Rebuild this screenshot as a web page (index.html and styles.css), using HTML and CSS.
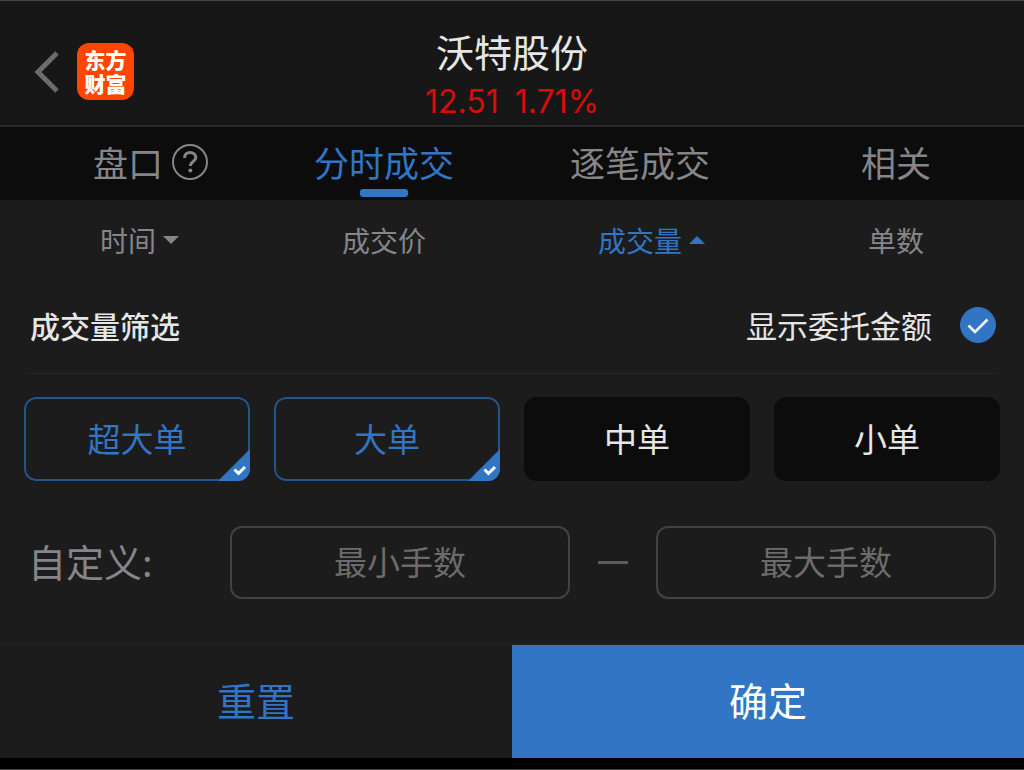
FILE: index.html
```html
<!DOCTYPE html>
<html lang="zh-CN">
<head>
    <meta charset="utf-8">
    <meta name="viewport" content="width=device-width, initial-scale=1">
    <title>沃特股份</title>
    <link rel="stylesheet" href="styles.css">
</head>
<body>
    <header class="header">
        <div class="header-left">
            <button class="back" type="button" aria-label="返回">
                <svg width="26" height="44" viewBox="0 0 26 44" fill="none" stroke="#6b6b6b" stroke-width="5">
                    <path d="M23 3L4 22L23 41"/>
                </svg>
            </button>
            <div class="logo">东方<br>财富</div>
        </div>
        <div class="stock">
            <h1>沃特股份</h1>
            <p class="quote"><span>12.51</span><span>1.71%</span></p>
        </div>
    </header>

    <nav class="tabs">
        <a class="tab" href="#">盘口<svg class="help" width="38" height="38" viewBox="0 0 38 38" fill="none" stroke="#85858a">
            <circle cx="19" cy="19" r="17" stroke-width="2"/>
            <path d="M13.500 15C13.500 11.500 16 9.500 19 9.500C22.300 9.500 24.800 11.500 24.800 14.500C24.800 18.500 19.300 18.500 19.300 23" stroke-width="3"/>
            <circle cx="19.300" cy="27.500" r="2" fill="#85858a" stroke="none"/>
        </svg></a>
        <a class="tab active" href="#">分时成交</a>
        <a class="tab" href="#">逐笔成交</a>
        <a class="tab" href="#">相关</a>
    </nav>

    <div class="columns">
        <button class="column" type="button">时间<svg class="arrow" width="16" height="8" viewBox="0 0 16 8" fill="currentColor"><path d="M0 0H16L8 8Z"/></svg></button>
        <button class="column" type="button">成交价</button>
        <button class="column active" type="button">成交量<svg class="arrow" width="16" height="8" viewBox="0 0 16 8" fill="currentColor"><path d="M0 8H16L8 0Z"/></svg></button>
        <button class="column" type="button">单数</button>
    </div>

    <form class="filter">
        <div class="filter-head">
            <h2>成交量筛选</h2>
            <label class="show-amount">
                显示委托金额
                <span class="round">
                    <input type="checkbox" checked>
                    <svg width="36" height="36" viewBox="0 0 36 36" fill="none" stroke="#fff" stroke-width="2.500"><path d="M8.500 18.500L15 25L27.500 12.500"/></svg>
                </span>
            </label>
        </div>

        <div class="chips">
            <label class="chip">
                <input type="checkbox" checked>
                <span>超大单</span>
                <svg class="corner" width="32" height="32" viewBox="0 0 32 32"><path d="M32 0V32H0Z" fill="#3175c4"/><path d="M16.500 20.500L20.500 24.500L27 18" fill="none" stroke="#fff" stroke-width="3"/></svg>
            </label>
            <label class="chip">
                <input type="checkbox" checked>
                <span>大单</span>
                <svg class="corner" width="32" height="32" viewBox="0 0 32 32"><path d="M32 0V32H0Z" fill="#3175c4"/><path d="M16.500 20.500L20.500 24.500L27 18" fill="none" stroke="#fff" stroke-width="3"/></svg>
            </label>
            <label class="chip">
                <input type="checkbox">
                <span>中单</span>
            </label>
            <label class="chip">
                <input type="checkbox">
                <span>小单</span>
            </label>
        </div>

        <div class="custom">
            <label class="custom-label" for="min">自定义:</label>
            <input class="lots" id="min" type="text" inputmode="numeric" placeholder="最小手数">
            <span class="dash"></span>
            <input class="lots" id="max" type="text" inputmode="numeric" placeholder="最大手数" aria-label="最大手数">
        </div>

        <div class="actions">
            <button class="reset" type="reset">重置</button>
            <button class="confirm" type="submit">确定</button>
        </div>
    </form>
</body>
</html>
```

FILE: styles.css
```css
* {
    box-sizing: border-box;
}

body {
    margin: 0;
    min-height: 100vh;
    display: flex;
    flex-direction: column;
    background-color: #1c1c1c;
    border-top: 1px solid #444;
    border-bottom: 1px solid #444;
    color: #e6e6e6;
    font-family: "Noto Sans CJK SC", sans-serif;
}

h1, h2, p {
    margin: 0;
}

button, input {
    font-family: inherit;
}

button {
    padding: 0;
    border: none;
    background: none;
    cursor: pointer;
}

svg {
    display: block;
}

/* header */
.header {
    display: grid;
    grid-template-columns: 1fr auto 1fr;
    padding: 27px 34px 0;
    background-color: #171717;
    border-bottom: 2px solid #282828;
}

.header-left {
    display: flex;
    align-items: center;
    gap: 17px;
    height: 87px;
}

.logo {
    width: 57px;
    height: 57px;
    padding: 4px 0;
    border-radius: 12px;
    background-color: #ff4500;
    color: #fff;
    font-size: 21px;
    font-weight: 900;
    line-height: 24px;
    text-align: center;
}

.stock {
    text-align: center;
}

.stock h1 {
    font-size: 38px;
    font-weight: 400;
    line-height: 46px;
}

.quote {
    display: flex;
    justify-content: center;
    gap: 16px;
    padding-top: 4px;
    color: #d90b0b;
    font-family: Inter, sans-serif;
    font-size: 32px;
    line-height: 47px;
}

/* tabs */
.tabs {
    display: flex;
    background-color: #0c0c0c;
}

.tab {
    flex: 1;
    display: flex;
    justify-content: center;
    align-items: center;
    position: relative;
    height: 73px;
    padding-bottom: 3px;
    color: #85858a;
    font-size: 35px;
    line-height: 70px;
    text-decoration: none;
}

.help {
    margin-left: 8px;
    margin-right: -46px;
}

.tab.active,
.column.active {
    color: #3175c4;
}

.tab.active::after {
    content: "";
    position: absolute;
    bottom: 3px;
    left: 50%;
    width: 48px;
    height: 8px;
    margin-left: -24px;
    border-radius: 3px;
    background-color: #3175c4;
}

/* sortable columns */
.columns {
    display: flex;
}

.column {
    flex: 1;
    display: flex;
    justify-content: center;
    align-items: center;
    height: 80px;
    color: #85858a;
    font-size: 28px;
    line-height: 80px;
}

.arrow {
    margin-left: 7px;
    margin-right: -23px;
}

/* filter panel */
.filter {
    flex: 1;
    display: flex;
    flex-direction: column;
}

.filter-head {
    display: flex;
    justify-content: space-between;
    align-items: center;
    height: 94px;
    margin: 0 28px;
    padding-bottom: 3px;
    border-bottom: 1px solid #272727;
}

.filter-head h2 {
    padding-left: 2px;
    font-size: 30px;
    font-weight: 500;
    line-height: 48px;
}

.show-amount {
    display: flex;
    align-items: center;
    gap: 28px;
    font-size: 31px;
    line-height: 48px;
}

.round {
    position: relative;
    width: 36px;
    height: 36px;
}

.round input {
    appearance: none;
    display: block;
    width: 36px;
    height: 36px;
    margin: 0;
    border: 1px solid #3175c4;
    border-radius: 50%;
}

.round input:checked {
    background-color: #3175c4;
}

.round svg {
    position: absolute;
    top: 0;
    left: 0;
    pointer-events: none;
}

.round input:not(:checked) + svg {
    display: none;
}

.chips {
    display: flex;
    gap: 24px;
    padding: 23px 24px 0;
}

.chip {
    flex: 1;
    position: relative;
    height: 84px;
    border-radius: 12px;
    overflow: hidden;
    font-size: 33px;
    line-height: 82px;
    text-align: center;
    cursor: pointer;
}

.chip input {
    appearance: none;
    position: absolute;
    inset: 0;
    margin: 0;
    border-radius: 12px;
    background-color: #0c0c0c;
}

.chip input:checked {
    border: 2px solid #26558c;
    background-color: transparent;
}

.chip span {
    position: relative;
}

.chip input:checked + span {
    color: #3175c4;
}

.corner {
    position: absolute;
    right: 0;
    bottom: 0;
}

.chip input:not(:checked) ~ .corner {
    display: none;
}

.custom {
    display: flex;
    align-items: center;
    padding: 45px 28px;
}

.custom-label {
    width: 202px;
    padding-bottom: 3px;
    color: #85858a;
    font-size: 38px;
    line-height: 70px;
}

.lots {
    flex: 1;
    min-width: 0;
    height: 73px;
    padding: 0 16px 3px;
    border: 2px solid #424242;
    border-radius: 12px;
    background: none;
    color: #e6e6e6;
    font-size: 33px;
    text-align: center;
}

.lots::placeholder {
    color: #6b6b6b;
    opacity: 1;
}

.dash {
    width: 30px;
    height: 3px;
    margin: 0 28px;
    background-color: #5c5c5c;
}

.actions {
    display: flex;
    margin-top: auto;
    border-top: 1px solid #242424;
    border-bottom: 11px solid #000;
}

.actions button {
    flex: 1;
    height: 113px;
    padding-bottom: 4px;
    font-size: 39px;
    line-height: 109px;
}

.reset {
    color: #3175c4;
}

.confirm {
    background-color: #3175c4;
    color: #fff;
}
```
